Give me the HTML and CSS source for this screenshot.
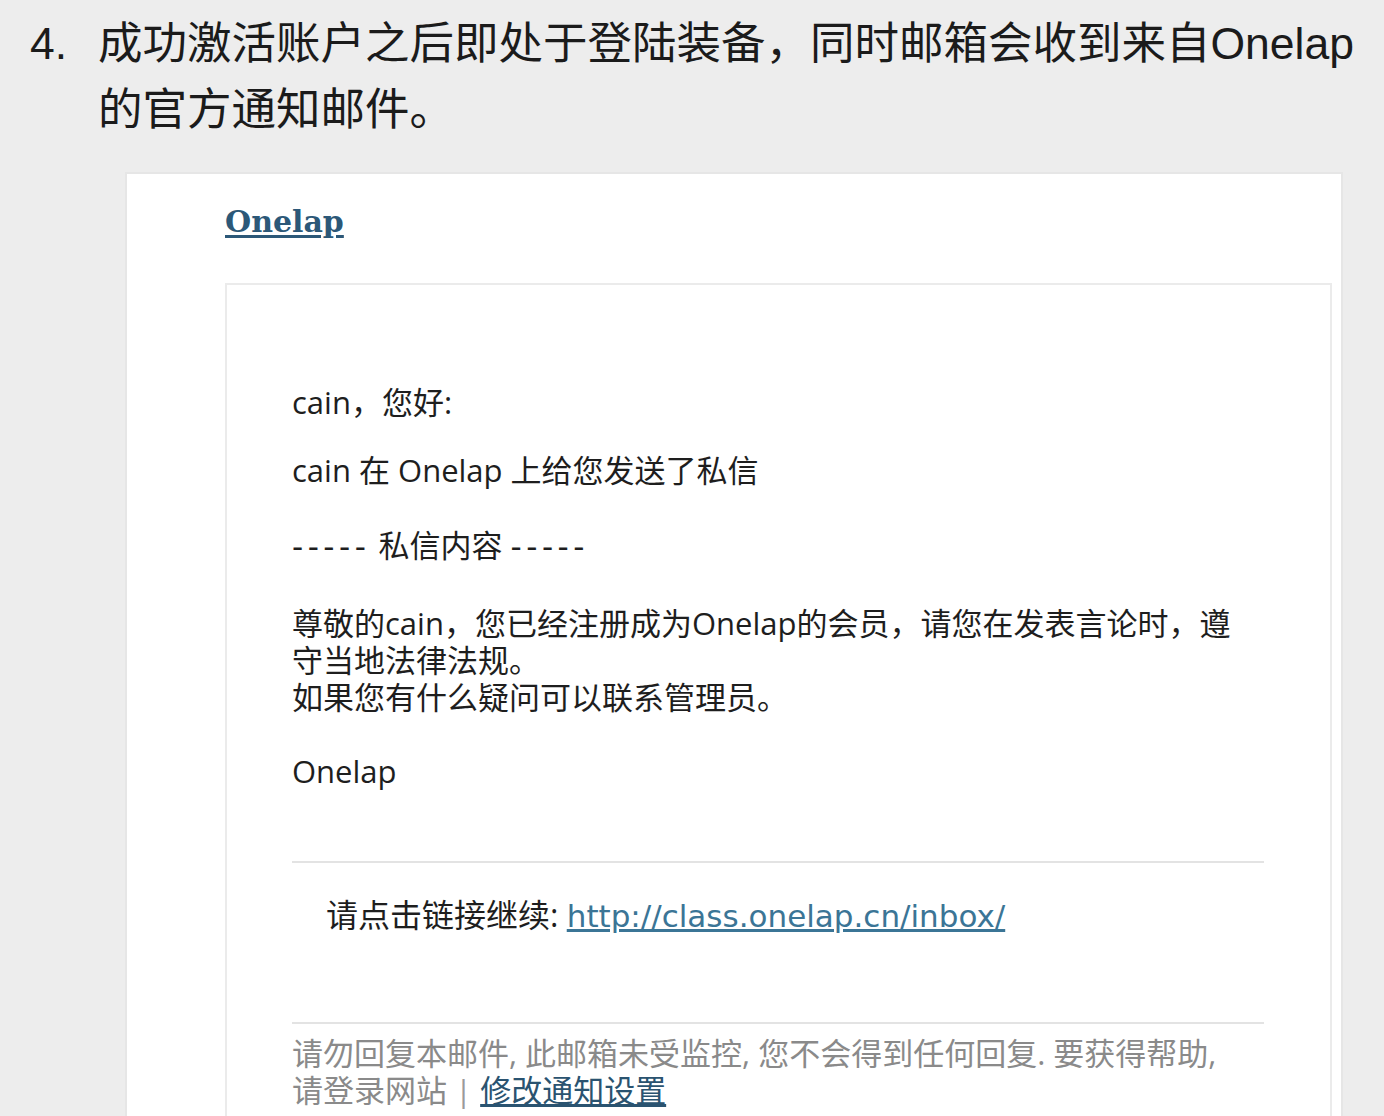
FILE: index.html
```html
<!DOCTYPE html>
<html lang="zh-CN">
<head>
    <meta charset="utf-8">
    <title>Onelap 通知邮件</title>
    <link rel="stylesheet" href="styles.css">
</head>
<body>

<div class="step">
    <span class="step-num">4.</span>
    <p class="step-text">成功激活账户之后即处于登陆装备，同时邮箱会收到来自Onelap<br>的官方通知邮件。</p>
</div>

<div class="mail">
    <a class="mail-brand" href="#">Onelap</a>

    <div class="mail-body">
        <p class="greet">cain，您好:</p>
        <p class="notice">cain 在 Onelap 上给您发送了私信</p>
        <p class="divider"><span class="dash">-----</span> 私信内容 <span class="dash">-----</span></p>
        <p class="message">尊敬的cain，您已经注册成为Onelap的会员，请您在发表言论时，遵<br>守当地法律法规。<br>如果您有什么疑问可以联系管理员。</p>
        <p class="sign">Onelap</p>

        <div class="mail-action">
            请点击链接继续: <a href="#">http://class.onelap.cn/inbox/</a>
        </div>

        <div class="mail-foot">
            请勿回复本邮件, 此邮箱未受监控, 您不会得到任何回复. 要获得帮助,<br>
            请登录网站 <span class="sep">|</span> <a href="#">修改通知设置</a>
        </div>
    </div>
</div>

</body>
</html>
```

FILE: styles.css
```css
body {
    margin: 0;
    background: #ededed;
    font-family: "Liberation Sans", "Noto Sans CJK SC", sans-serif;
    color: #1b1b1b;
}

.step {
    display: flex;
    padding: 11px 0 0 30px;
    font-size: 44.5px;
    line-height: 66px;
}

.step-num {
    width: 68px;
    flex: none;
}

.step-text {
    margin: 0;
}

.mail {
    margin: 29px 0 0 125px;
    width: 1218px;
    padding: 30px 9px 60px 98px;
    box-sizing: border-box;
    background: #fff;
    border: 2px solid #e6e6e6;
}

.mail-brand {
    display: inline-block;
    font-family: "DejaVu Serif", serif;
    font-weight: bold;
    font-size: 30px;
    line-height: 36px;
    color: #2c5878;
    text-decoration: underline;
    text-underline-offset: 3px;
}

.mail-body {
    margin-top: 43px;
    padding: 99px 66px 60px 65px;
    border: 2px solid #ebebeb;
    font-family: "Open Sans", "Noto Sans CJK SC", sans-serif;
    font-size: 31px;
    line-height: 37px;
    color: #1e1e1e;
}

.mail-body p {
    margin: 0;
}

.greet {
    margin-bottom: 31px !important;
}

.notice {
    margin-bottom: 38px !important;
}

.divider {
    margin-bottom: 40px !important;
}

.dash {
    font-family: "DejaVu Sans", sans-serif;
    letter-spacing: 4.5px;
}

.message {
    margin-bottom: 37px !important;
}

.mail-action {
    margin-top: 71px;
    padding: 33px 0 0 34px;
    border-top: 2px solid #e3e3e3;
    font-size: 32px;
}

.mail-action a {
    font-family: "DejaVu Sans", sans-serif;
    font-size: 31px;
    color: #3b7596;
    text-decoration: underline;
}

.mail-foot {
    margin-top: 87px;
    padding-top: 11px;
    border-top: 2px solid #e3e3e3;
    color: #8a8a8a;
}

.mail-foot .sep {
    color: #9a9a9a;
}

.mail-foot a {
    color: #2a5370;
    text-decoration: underline;
}
```
